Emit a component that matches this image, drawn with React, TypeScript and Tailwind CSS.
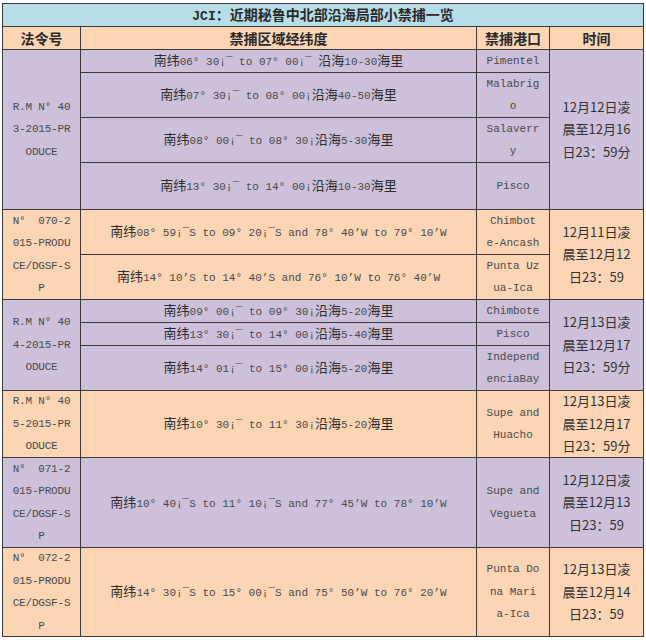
import React from "react";

const CJK_RE = /([\u3000-\u303f\u4e00-\u9fff\uff00-\uffef]+)/;

type Row = { area: string; port: string[] };
type Group = { tone: "lav" | "org"; law: string[]; time: string[]; rows: Row[] };

const groups: Group[] = [
	{
		tone: "lav",
		law: ["R.M N° 40", "3-2015-PR", "ODUCE"],
		time: ["12月12日凌", "晨至12月16", "日23：59分"],
		rows: [
			{ area: "南纬06° 30¡¯ to 07° 00¡¯ 沿海10-30海里", port: ["Pimentel"] },
			{ area: "南纬07° 30¡¯ to 08° 00¡沿海40-50海里", port: ["Malabrig", "o"] },
			{ area: "南纬08° 00¡¯ to 08° 30¡沿海5-30海里", port: ["Salaverr", "y"] },
			{ area: "南纬13° 30¡¯ to 14° 00¡沿海10-30海里", port: ["Pisco"] },
		],
	},
	{
		tone: "org",
		law: ["N°  070-2", "015-PRODU", "CE/DGSF-S", "P"],
		time: ["12月11日凌", "晨至12月12", "日23：59"],
		rows: [
			{ area: "南纬08° 59¡¯S to 09° 20¡¯S and 78° 40’W to 79° 10’W", port: ["Chimbot", "e-Ancash"] },
			{ area: "南纬14° 10’S to 14° 40’S and 76° 10’W to 76° 40’W", port: ["Punta Uz", "ua-Ica"] },
		],
	},
	{
		tone: "lav",
		law: ["R.M N° 40", "4-2015-PR", "ODUCE"],
		time: ["12月13日凌", "晨至12月17", "日23：59分"],
		rows: [
			{ area: "南纬09° 00¡¯ to 09° 30¡沿海5-20海里", port: ["Chimbote"] },
			{ area: "南纬13° 30¡¯ to 14° 00¡沿海5-40海里", port: ["Pisco"] },
			{ area: "南纬14° 01¡¯ to 15° 00¡沿海5-20海里", port: ["Independ", "enciaBay"] },
		],
	},
	{
		tone: "org",
		law: ["R.M N° 40", "5-2015-PR", "ODUCE"],
		time: ["12月13日凌", "晨至12月17", "日23：59分"],
		rows: [{ area: "南纬10° 30¡¯ to 11° 30¡沿海5-20海里", port: ["Supe and", "Huacho"] }],
	},
	{
		tone: "lav",
		law: ["N°  071-2", "015-PRODU", "CE/DGSF-S", "P"],
		time: ["12月12日凌", "晨至12月13", "日23：59"],
		rows: [
			{ area: "南纬10° 40¡¯S to 11° 10¡¯S and 77° 45’W to 78° 10’W", port: ["Supe and", "Vegueta"] },
		],
	},
	{
		tone: "org",
		law: ["N°  072-2", "015-PRODU", "CE/DGSF-S", "P"],
		time: ["12月13日凌", "晨至12月14", "日23：59"],
		rows: [
			{ area: "南纬14° 30¡¯S to 15° 00¡¯S and 75° 50’W to 76° 20’W", port: ["Punta Do", "na Mari", "a-Ica"] },
		],
	},
];

const spans: Record<number, string> = {
	1: "row-span-1",
	2: "row-span-2",
	3: "row-span-3",
	4: "row-span-4",
};

const Mixed: React.FC<{ text: string; cjk?: string }> = ({
	text,
	cjk = "text-[13px] text-[#2e2e2e]",
}) => (
	<>
		{text.split(CJK_RE).map((part, i) =>
			CJK_RE.test(part) ? (
				<span key={i} className={"font-['Noto_Sans_CJK_SC',sans-serif] " + cjk}>
					{part}
				</span>
			) : (
				<span key={i} className="whitespace-pre">
					{part}
				</span>
			),
		)}
	</>
);

const Cell: React.FC<{ className?: string; children: React.ReactNode }> = ({
	className = "",
	children,
}) => (
	<div
		className={
			"flex flex-col items-center justify-center text-center border-r border-b border-[#3a3a3a] " +
			className
		}
	>
		{children}
	</div>
);

const Lines: React.FC<{ lines: string[] }> = ({ lines }) => (
	<>
		{lines.map((l, i) => (
			<div key={i} className="leading-[22.5px] whitespace-pre">
				{l}
			</div>
		))}
	</>
);

export default function App() {
	return (
		<div className="bg-white w-[646px] h-[640px] pt-[3px] pl-[2px]">
			<div className="grid w-[642px] grid-cols-[78px_396px_73px_94px] grid-rows-[23px_23px_23px_45px_45px_47px_45px_45px_23px_23px_45px_67px_90px_89px] border-l border-t border-[#3a3a3a] font-['Liberation_Mono',monospace] text-[#4a4a4a]">
				{/* title */}
				<Cell className="col-span-4 bg-[#b7dee8]">
					<div className="leading-[22px] font-bold text-[13px] text-[#2a2a2a]">
						<Mixed text="JCI：近期秘鲁中北部沿海局部小禁捕一览" cjk="text-[14px] font-bold" />
					</div>
				</Cell>

				{/* header */}
				{["法令号", "禁捕区域经纬度", "禁捕港口", "时间"].map((h) => (
					<Cell key={h} className="bg-[#fcd5b4]">
						<span className="font-['Noto_Sans_CJK_SC',sans-serif] text-[14px] font-semibold text-[#2a2a2a] leading-[22px]">
							{h}
						</span>
					</Cell>
				))}

				{groups.map((g, gi) => {
					const bg = g.tone === "lav" ? "bg-[#ccc0da]" : "bg-[#fcd5b4]";
					const span = spans[g.rows.length];
					return (
						<React.Fragment key={gi}>
							<Cell className={`${bg} ${span} text-[11px] tracking-[-0.2px]`}>
								<Lines lines={g.law} />
							</Cell>
							{g.rows.map((r, ri) => (
								<React.Fragment key={ri}>
									<Cell className={`${bg} text-[11px]`}>
										<div className="leading-[22px] whitespace-pre">
											<Mixed text={r.area} />
										</div>
									</Cell>
									<Cell className={`${bg} text-[11px]`}>
										<Lines lines={r.port} />
									</Cell>
									{ri === 0 && (
										<Cell
											className={`${bg} ${span} font-['Noto_Sans_CJK_SC',sans-serif] text-[13px] text-[#333]`}
										>
											<Lines lines={g.time} />
										</Cell>
									)}
								</React.Fragment>
							))}
						</React.Fragment>
					);
				})}
			</div>
		</div>
	);
}
